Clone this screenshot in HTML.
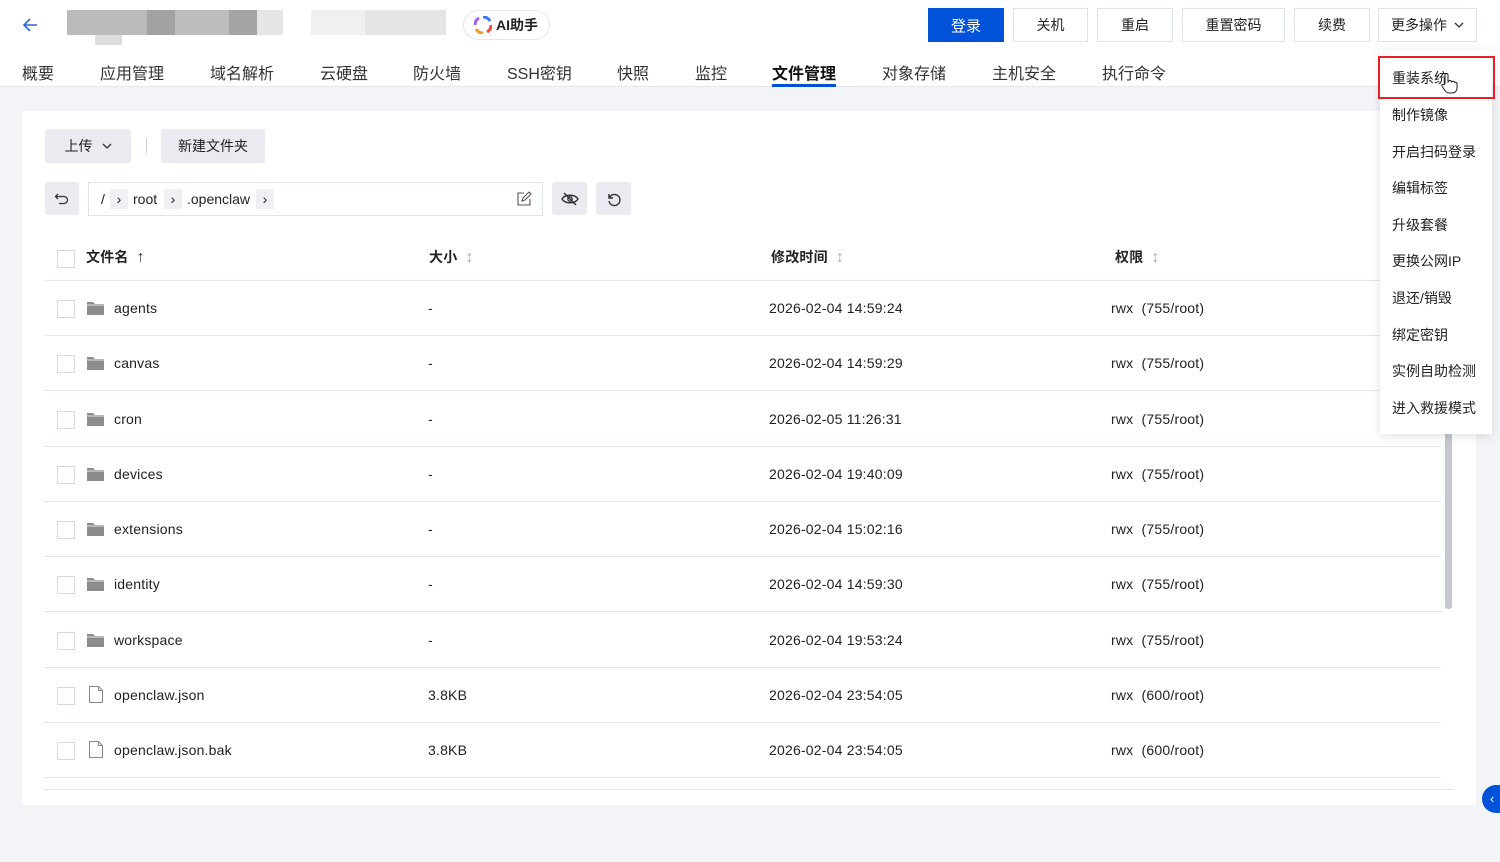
<!DOCTYPE html>
<html><head><meta charset="utf-8"><style>
*{box-sizing:border-box;margin:0;padding:0}
body{width:1500px;height:862px;overflow:hidden;background:#f3f4f8;font-family:"Liberation Sans","Noto Sans CJK SC",sans-serif;color:#222;position:relative;font-size:14px}
.abs{position:absolute}
.hdr{position:absolute;left:0;top:0;width:1500px;height:87px;background:#fff;border-bottom:1px solid #e6e8ee}
.btn{position:absolute;top:8px;height:34px;border:1px solid #dfe3ec;background:#fff;font-size:14px;display:flex;align-items:center;justify-content:center;color:#222}
.tab{position:absolute;top:60px;font-size:16px;color:#333}
.panel{position:absolute;left:22px;top:111px;width:1454px;height:694px;background:#fff}
.gbtn{position:absolute;background:#e9ebf0;border-radius:3px;display:flex;align-items:center;justify-content:center;font-size:14px}
.row{position:absolute;left:45px;width:1396px;height:55px;border-bottom:1px solid #e3e6ee;font-size:14px;letter-spacing:.2px}
.row span{position:absolute;top:19px;line-height:16px;height:16px;white-space:nowrap}
.cb{position:absolute;left:12px;width:18px;height:18px;border:1px solid #d5d9e2;background:#fff}
.menu{position:absolute;left:1380px;top:50px;width:112px;height:384px;background:#fff;box-shadow:0 2px 10px rgba(0,0,0,.12)}
.menu div{position:absolute;left:12px;font-size:14px;color:#222}
.srt{color:#aaa;font-weight:normal;font-size:16px;margin-left:8px}
</style></head><body>
<div class="hdr">
 <svg class="abs" style="left:22px;top:17px" width="16" height="16" viewBox="0 0 16 16"><path d="M15 8H2M8 2L2 8l6 6" stroke="#2f66e0" stroke-width="1.6" fill="none"/></svg>
 <div class="abs" style="left:67px;top:10px;width:216px;height:25px;background:linear-gradient(90deg,#bbb 0 37%,#a2a2a2 37% 50%,#bdbdbd 50% 75%,#a5a5a5 75% 88%,#e6e6e6 88%)"></div>
 <div class="abs" style="left:95px;top:35px;width:27px;height:10px;background:#ddd"></div>
 <div class="abs" style="left:311px;top:10px;width:135px;height:25px;background:linear-gradient(90deg,#f0f0f0 0 40%,#e4e4e4 40%)"></div>
 <div class="abs" style="left:463px;top:10px;width:87px;height:30px;border:1px solid #e3e6ee;border-radius:15px;font-size:14px;font-weight:bold;display:flex;align-items:center;padding-left:32px">AI助手</div>
 <svg class="abs" style="left:474px;top:16px" width="18" height="18" viewBox="0 0 18 18"><path d="M9 1a8 8 0 0 1 7 4" stroke="#3a7bf0" stroke-width="3" fill="none"/><path d="M17 9a8 8 0 0 1-4 7" stroke="#f0503a" stroke-width="3" fill="none"/><path d="M9 17a8 8 0 0 1-7-4" stroke="#f59a2a" stroke-width="3" fill="none"/><path d="M1 9a8 8 0 0 1 4-7" stroke="#9c5af0" stroke-width="3" fill="none"/></svg>
 <div class="btn" style="left:928px;width:76px;background:#0052d9;border-color:#0052d9;color:#fff;font-size:15px">登录</div>
 <div class="btn" style="left:1013px;width:75px">关机</div>
 <div class="btn" style="left:1097px;width:76px">重启</div>
 <div class="btn" style="left:1182px;width:103px">重置密码</div>
 <div class="btn" style="left:1294px;width:76px">续费</div>
 <div class="btn" style="left:1378px;width:99px">更多操作 <svg style="margin-left:7px" width="10" height="6" viewBox="0 0 10 6"><path d="M1 1l4 4 4-4" stroke="#333" stroke-width="1.3" fill="none"/></svg></div>
 <div class="tab" style="left:22px">概要</div>
 <div class="tab" style="left:100px">应用管理</div>
 <div class="tab" style="left:210px">域名解析</div>
 <div class="tab" style="left:320px">云硬盘</div>
 <div class="tab" style="left:413px">防火墙</div>
 <div class="tab" style="left:507px">SSH密钥</div>
 <div class="tab" style="left:617px">快照</div>
 <div class="tab" style="left:695px">监控</div>
 <div class="tab" style="left:772px;font-weight:bold;color:#111">文件管理</div>
 <div class="abs" style="left:772px;top:84px;width:64px;height:3px;background:#0052d9"></div>
 <div class="tab" style="left:882px">对象存储</div>
 <div class="tab" style="left:992px">主机安全</div>
 <div class="tab" style="left:1102px">执行命令</div>
</div>
<div class="panel"></div>
<div class="gbtn" style="left:45px;top:129px;width:86px;height:34px">上传 <svg style="margin-left:9px" width="10" height="6" viewBox="0 0 10 6"><path d="M1 1l4 4 4-4" stroke="#333" stroke-width="1.3" fill="none"/></svg></div>
<div class="abs" style="left:146px;top:139px;width:1px;height:14px;background:#ccc"></div>
<div class="gbtn" style="left:161px;top:129px;width:104px;height:34px">新建文件夹</div>
<div class="gbtn" style="left:45px;top:182px;width:34px;height:33px"><svg width="16" height="16" viewBox="0 0 16 16"><path d="M4 3L1.5 5.5 4 8M2 5.5h8a3.5 3.5 0 0 1 0 7H5" stroke="#333" stroke-width="1.3" fill="none"/></svg></div>
<div class="abs" style="left:88px;top:182px;width:455px;height:34px;border:1px solid #dfe3ec;font-size:14px">
 <span class="abs" style="left:12px;top:8px">/</span>
 <span class="abs" style="left:21px;top:6px;width:18px;height:20px;background:#eef0f4;text-align:center;line-height:20px">&#8250;</span>
 <span class="abs" style="left:44px;top:8px">root</span>
 <span class="abs" style="left:75px;top:6px;width:18px;height:20px;background:#eef0f4;text-align:center;line-height:20px">&#8250;</span>
 <span class="abs" style="left:98px;top:8px">.openclaw</span>
 <span class="abs" style="left:167px;top:6px;width:18px;height:20px;background:#eef0f4;text-align:center;line-height:20px">&#8250;</span>
 <svg class="abs" style="left:427px;top:8px" width="16" height="16" viewBox="0 0 16 16"><path d="M8 2H2v12h12V8M6 10l1-3 6-6 2 2-6 6z" stroke="#555" stroke-width="1.1" fill="none"/></svg>
</div>
<div class="gbtn" style="left:552px;top:182px;width:35px;height:33px"><svg width="18" height="14" viewBox="0 0 18 14"><path d="M1 7c3-5 13-5 16 0-3 5-13 5-16 0z" stroke="#333" stroke-width="1.4" fill="none"/><circle cx="9" cy="7" r="2.2" stroke="#333" stroke-width="1.3" fill="none"/><path d="M3 1l12 12" stroke="#333" stroke-width="1.4"/></svg></div>
<div class="gbtn" style="left:596px;top:182px;width:35px;height:33px"><svg width="16" height="16" viewBox="0 0 16 16"><path d="M3 3v4h4M3.5 6.5A5.5 5.5 0 1 1 3 10" stroke="#333" stroke-width="1.4" fill="none"/></svg></div>

<div class="row" style="top:226px;font-weight:bold">
 <div class="cb" style="top:24px"></div>
 <span style="left:41px;top:23px">文件名<span class="srt" style="position:static;color:#333">&#8593;</span></span>
 <span style="left:384px;top:23px">大小<span class="srt" style="position:static">&#8597;</span></span>
 <span style="left:726px;top:23px">修改时间<span class="srt" style="position:static">&#8597;</span></span>
 <span style="left:1070px;top:23px">权限<span class="srt" style="position:static">&#8597;</span></span>
</div>
<div id="rows"></div>
<div class="abs" style="left:45px;top:789px;width:1409px;height:1px;background:#e3e6ee"></div>
<div class="abs" style="left:1445px;top:430px;width:7px;height:179px;background:#c3c8d3;border-radius:3px"></div>
<div class="abs" style="left:1482px;top:785px;width:30px;height:28px;background:#0052d9;border-radius:14px;color:#fff;font-size:13px;padding-left:8px;line-height:27px">&#8249;</div>

<div class="menu">
 <div style="top:18px">重装系统</div>
 <div style="top:55px">制作镜像</div>
 <div style="top:92px">开启扫码登录</div>
 <div style="top:128px">编辑标签</div>
 <div style="top:165px">升级套餐</div>
 <div style="top:201px">更换公网IP</div>
 <div style="top:238px">退还/销毁</div>
 <div style="top:275px">绑定密钥</div>
 <div style="top:311px">实例自助检测</div>
 <div style="top:348px">进入救援模式</div>
</div>
<div class="abs" style="left:1378px;top:56px;width:117px;height:43px;border:2px solid #e8202a"></div>
<svg class="abs" style="left:1440px;top:72px" width="18" height="22" viewBox="0 0 18 22"><path d="M5 12V3a1.5 1.5 0 0 1 3 0v7l1-1a1.4 1.4 0 0 1 2.5 1l1-.5a1.4 1.4 0 0 1 2.3 1l.6-.2c1 0 1.6.6 1.6 1.6V16c0 3-2 5-5 5H9c-2 0-3-1-4.5-3L2 14c-.6-1 .6-2.2 1.6-1.2z" fill="#fff" stroke="#222" stroke-width="1"/></svg>
<script>
const d=[["agents","-","2026-02-04 14:59:24","755",1],["canvas","-","2026-02-04 14:59:29","755",1],["cron","-","2026-02-05 11:26:31","755",1],["devices","-","2026-02-04 19:40:09","755",1],["extensions","-","2026-02-04 15:02:16","755",1],["identity","-","2026-02-04 14:59:30","755",1],["workspace","-","2026-02-04 19:53:24","755",1],["openclaw.json","3.8KB","2026-02-04 23:54:05","600",0],["openclaw.json.bak","3.8KB","2026-02-04 23:54:05","600",0]];
let h="";d.forEach((r,i)=>{const t=281+i*55.25;
const ic=r[4]?'<svg style="position:absolute;left:42px;top:20px" width="17" height="14" viewBox="0 0 17 14"><path d="M0 1h6l2 2h9v11H0z" fill="#8c8c8c"/><path d="M0 4h17" stroke="#fff" stroke-width=".8"/></svg>':'<svg style="position:absolute;left:44px;top:18px" width="14" height="17" viewBox="0 0 14 17"><path d="M.5.5h9l4 4v12H.5z" fill="none" stroke="#888"/><path d="M9.5.5v4h4" fill="none" stroke="#888"/></svg>';
h+=`<div class="row" style="top:${t}px"><div class="cb" style="top:19px"></div>${ic}<span style="left:69px">${r[0]}</span><span style="left:383px">${r[1]}</span><span style="left:724px">${r[2]}</span><span style="left:1066px">rwx&nbsp;&nbsp;(${r[3]}/root)</span></div>`});
document.getElementById("rows").innerHTML=h;
</script>
</body></html>
